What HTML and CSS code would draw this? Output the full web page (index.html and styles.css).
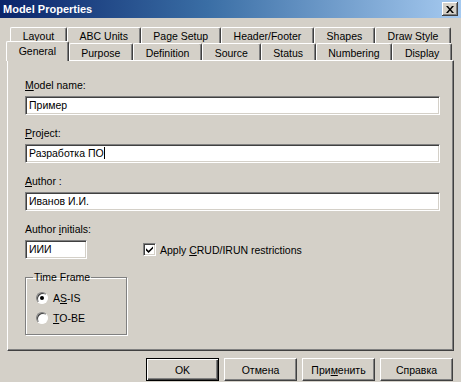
FILE: index.html
```html
<!DOCTYPE html>
<html>
<head>
<meta charset="utf-8">
<title>Model Properties</title>
<link rel="stylesheet" href="styles.css">
</head>
<body>
<div class="titlebar">
  <span class="title">Model Properties</span>
  <span class="close"><svg width="8" height="7" viewBox="0 0 8 7"><path d="M0 0h2l2 2.4L6 0h2L5 3.5 8 7H6L4 4.6 2 7H0l3-3.5z" fill="#000"/></svg></span>
</div>
<div class="tabs">
  <div class="tabrow back">
    <div class="tab">Layout</div>
    <div class="tab">ABC Units</div>
    <div class="tab">Page Setup</div>
    <div class="tab">Header/Footer</div>
    <div class="tab">Shapes</div>
    <div class="tab">Draw Style</div>
  </div>
  <div class="tabrow front">
    <div class="tab active">General</div>
    <div class="tab">Purpose</div>
    <div class="tab">Definition</div>
    <div class="tab">Source</div>
    <div class="tab">Status</div>
    <div class="tab">Numbering</div>
    <div class="tab">Display</div>
  </div>
</div>
<div class="panel">
  <div class="field">
    <div class="label"><u>M</u>odel name:</div>
    <div class="textbox">Пример</div>
  </div>
  <div class="field">
    <div class="label"><u>P</u>roject:</div>
    <div class="textbox">Разработка ПО<span class="caret"></span></div>
  </div>
  <div class="field">
    <div class="label"><u>A</u>uthor :</div>
    <div class="textbox">Иванов И.И.</div>
  </div>
  <div class="field">
    <div class="label">Author <u>i</u>nitials:</div>
    <div class="initrow">
      <div class="textbox short">ИИИ</div>
      <div class="check">
        <span class="checkbox"><svg width="7" height="7" viewBox="0 0 7 7"><path d="M0 2.2v2.2l2.6 2.6L7 2.6V0.4L2.6 4.8z" fill="#000"/></svg></span>
        <span>Apply <u>C</u>RUD/IRUN restrictions</span>
      </div>
    </div>
  </div>
  <fieldset class="group">
    <legend>Time Frame</legend>
    <div class="radiorow"><span class="radio on"></span><span>A<u>S</u>-IS</span></div>
    <div class="radiorow"><span class="radio"></span><span><u>T</u>O-BE</span></div>
  </fieldset>
</div>
<div class="buttons">
  <button class="btn default">OK</button>
  <button class="btn">Отмена</button>
  <button class="btn">При<u>м</u>енить</button>
  <button class="btn">Справка</button>
</div>
</body>
</html>
```
FILE: styles.css
```css
html, body {
  margin: 0;
  padding: 0;
}
body {
  width: 461px;
  height: 382px;
  overflow: hidden;
  background: #d4d0c8;
  color: #000;
  font-family: "Liberation Sans", Arial, sans-serif;
  font-size: 10.5px;
}
u {
  text-decoration: underline;
  text-underline-offset: 1px;
}

/* title bar */
.titlebar {
  height: 18px;
  display: flex;
  align-items: center;
  justify-content: space-between;
  padding: 0 3px 0 3px;
  background: linear-gradient(to right, #0a246a 0%, #3a6ea5 45%, #a6caf0 100%);
}
.title {
  color: #fff;
  font-weight: bold;
  font-size: 11px;
}
.close {
  width: 16px;
  height: 14px;
  box-sizing: border-box;
  background: #d4d0c8;
  display: flex;
  align-items: center;
  justify-content: center;
  box-shadow: inset -1px -1px #404040, inset 1px 1px #fff, inset -2px -2px #808080;
}

/* tabs */
.tabs {
  padding-top: 9px;
}
.tabrow {
  display: flex;
  align-items: flex-end;
}
.tabrow.back {
  margin-left: 10px;
  width: 441px;
  height: 16px;
}
.tabrow.front {
  margin-left: 6px;
  width: 446px;
  height: 17px;
}
.tab {
  flex: 1 1 auto;
  box-sizing: border-box;
  height: 100%;
  padding: 1px 5px 0;
  text-align: center;
  line-height: 14px;
  white-space: nowrap;
  background: #d4d0c8;
  border-top: 1px solid #fff;
  border-left: 1px solid #fff;
  border-right: 1px solid #404040;
  border-radius: 2px 2px 0 0;
  box-shadow: inset -1px 0 #808080;
}
.tabrow.front .tab {
  padding-top: 2px;
}
.tab.active {
  height: 20px;
  margin-bottom: -1px;
  position: relative;
  z-index: 1;
}
.tabrow.front .tab.active {
  padding-top: 1px;
  line-height: 16px;
}

/* panel */
.panel {
  margin-left: 7px;
  width: 447px;
  height: 291px;
  box-sizing: border-box;
  border-top: 1px solid #fff;
  border-left: 1px solid #fff;
  border-right: 1px solid #404040;
  border-bottom: 1px solid #404040;
  box-shadow: inset -1px -1px #808080;
  padding: 18px 0 0 17px;
}
.field {
  margin-bottom: 12px;
}
.label {
  line-height: 13px;
  margin-bottom: 4px;
}
.textbox {
  box-sizing: border-box;
  width: 415px;
  height: 19px;
  background: #fff;
  border: 1px solid;
  border-color: #808080 #fff #fff #808080;
  box-shadow: inset 1px 1px #404040, inset -1px -1px #d4d0c8;
  padding: 0 3px;
  line-height: 17px;
  white-space: nowrap;
}
.textbox.short {
  width: 62px;
}
.caret {
  display: inline-block;
  width: 1px;
  height: 12px;
  background: #000;
  vertical-align: -2px;
}
.initrow {
  display: flex;
  align-items: center;
}
.check {
  margin-left: 56px;
  display: flex;
  align-items: center;
  gap: 4px;
}
.checkbox {
  width: 13px;
  height: 13px;
  box-sizing: border-box;
  background: #fff;
  border: 1px solid;
  border-color: #808080 #fff #fff #808080;
  box-shadow: inset 1px 1px #404040, inset -1px -1px #d4d0c8;
  display: flex;
  align-items: center;
  justify-content: center;
}

/* group */
.group {
  margin: 2px 0 0 0;
  width: 102px;
  box-sizing: border-box;
  padding: 4px 8px 6px 10px;
  border: 1px solid #808080;
  box-shadow: inset 1px 1px #fff, 1px 1px #fff;
  min-width: 0;
}
.group legend {
  padding: 0 1px;
  margin-left: -3px;
  line-height: 13px;
}
.radiorow {
  display: flex;
  align-items: center;
  gap: 5px;
  height: 20px;
}
.radio {
  width: 12px;
  height: 12px;
  box-sizing: border-box;
  border-radius: 50%;
  border: 1px solid;
  border-color: #808080 #fff #fff #808080;
  background: #fff;
  box-shadow: inset 1px 1px #404040;
  display: flex;
  align-items: center;
  justify-content: center;
}
.radio.on::after {
  content: "";
  width: 4px;
  height: 4px;
  border-radius: 50%;
  background: #000;
}

/* buttons */
.buttons {
  display: flex;
  justify-content: flex-end;
  gap: 5px;
  padding: 7px 8px 0 0;
}
.btn {
  width: 73px;
  height: 23px;
  box-sizing: border-box;
  margin: 0;
  padding: 0;
  font: inherit;
  color: #000;
  background: #d4d0c8;
  border: 1px solid;
  border-color: #fff #404040 #404040 #fff;
  box-shadow: inset -1px -1px #808080;
}
.btn.default {
  border-color: #000;
  box-shadow: inset 1px 1px #fff, inset -1px -1px #404040, inset -2px -2px #808080;
}
```
